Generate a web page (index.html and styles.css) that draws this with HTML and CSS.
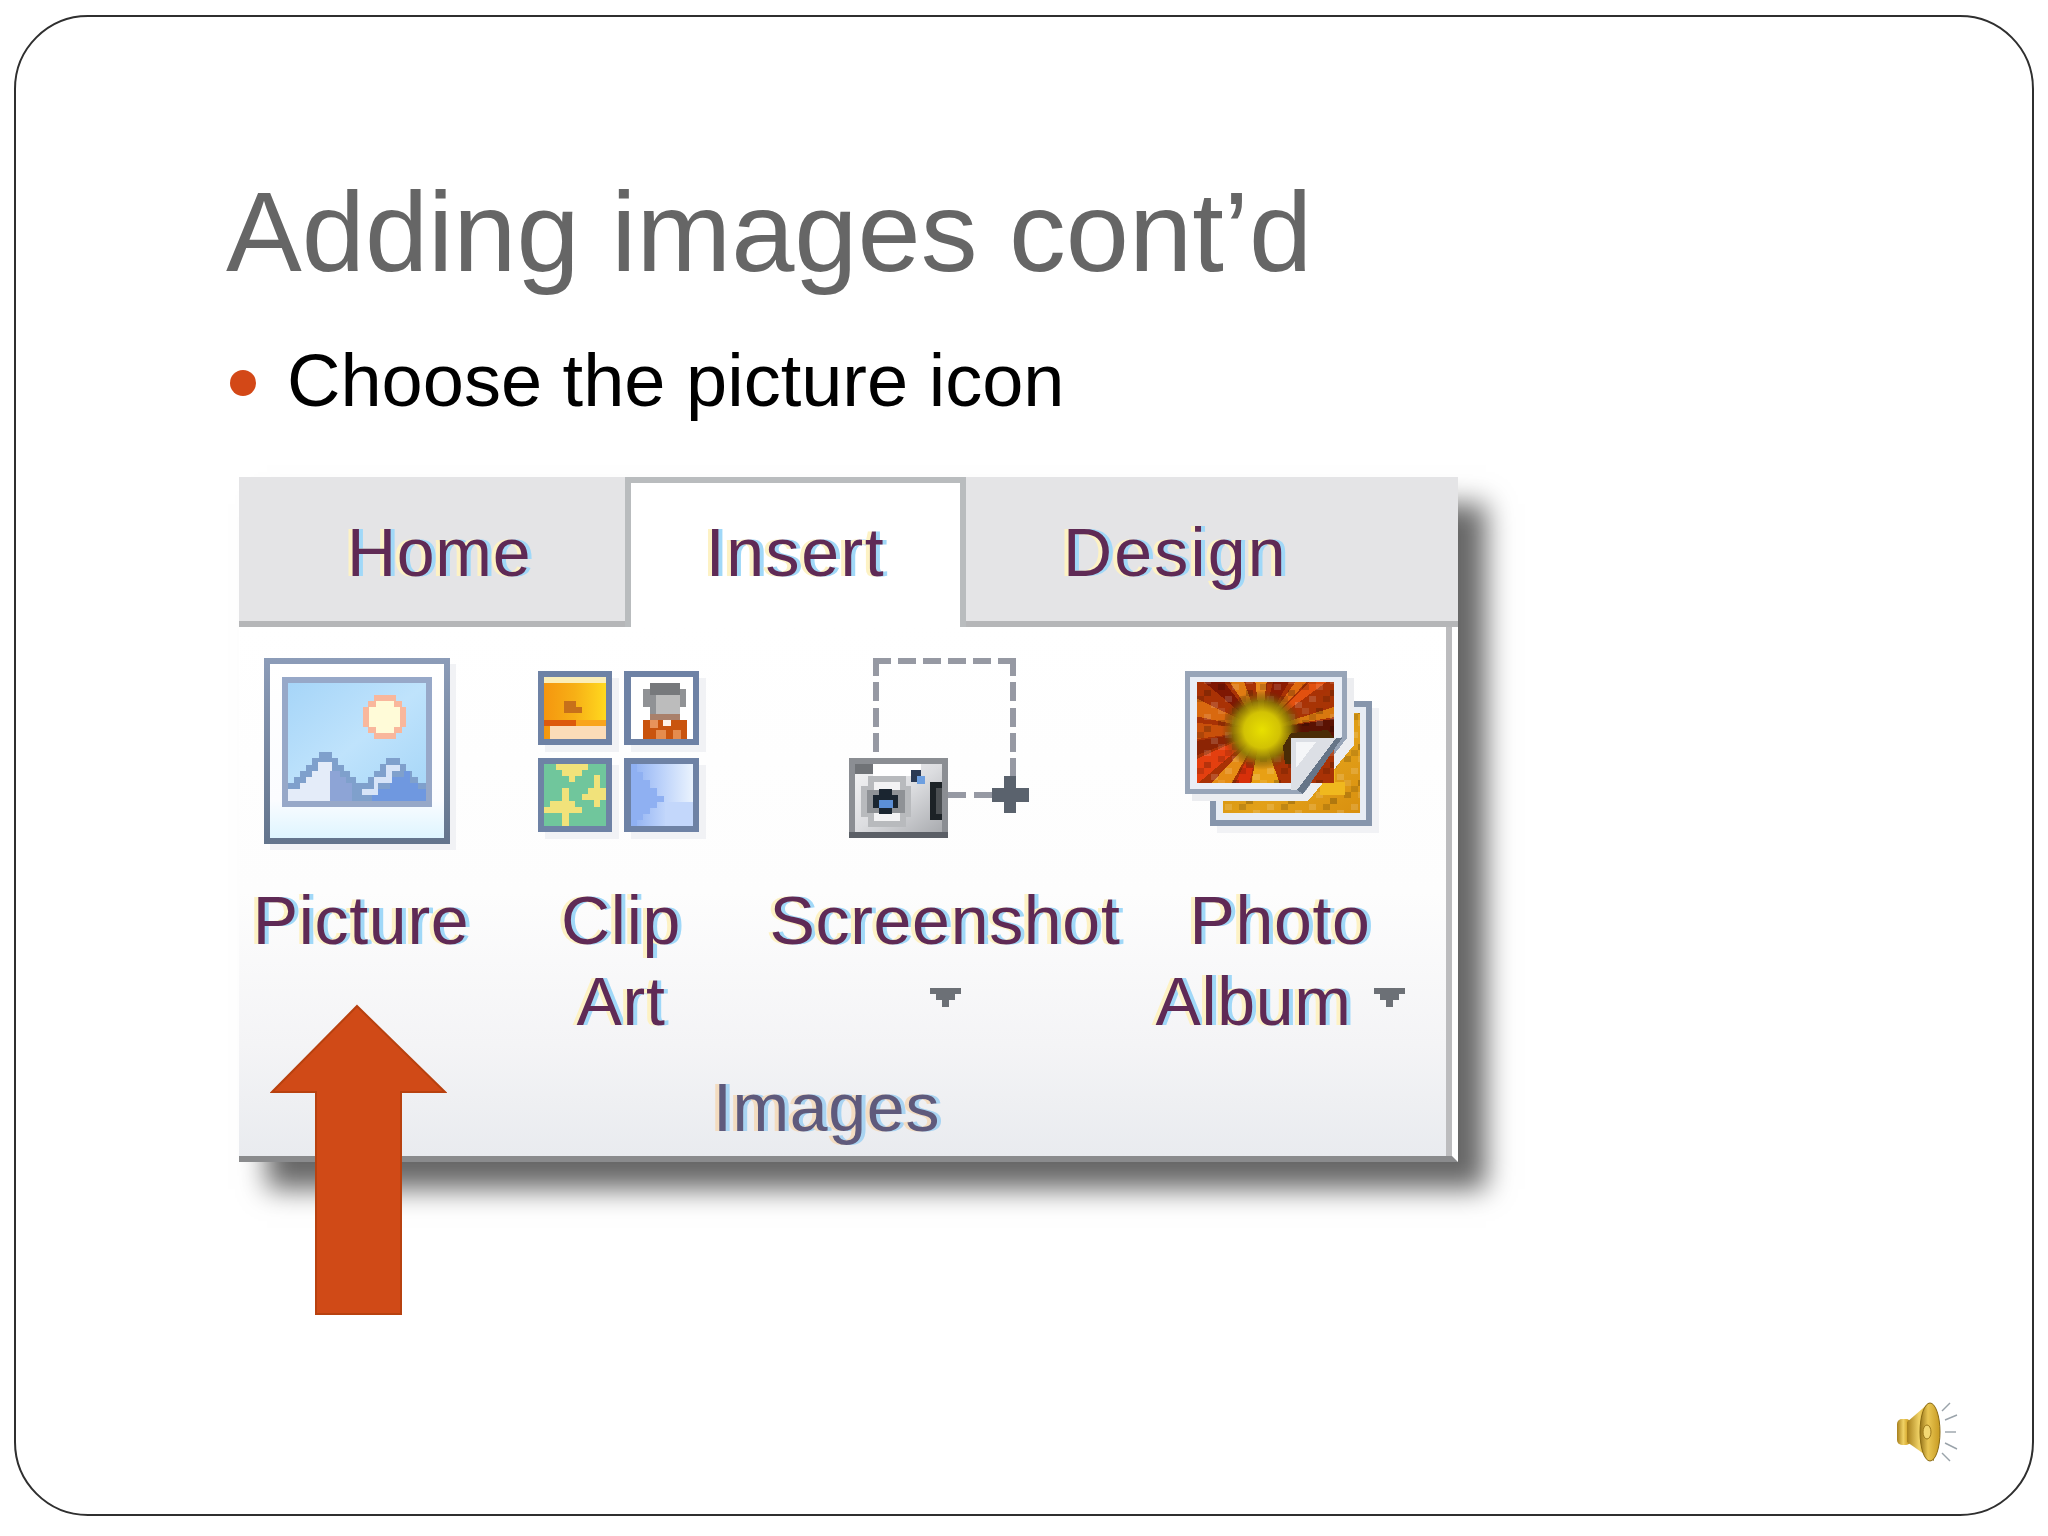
FILE: index.html
```html
<!DOCTYPE html>
<html lang="en">
<head>
<meta charset="utf-8">
<title>Adding images cont'd</title>
<link rel="stylesheet" href="styles.css">
</head>
<body>
<main class="slide">
  <h1 class="title">Adding images cont’d</h1>
  <div class="bullet-row"><span class="bullet"></span><p class="bullet-text">Choose the picture icon</p></div>

  <section class="ribbon">
    <div class="tabs">
      <div class="tab tab-home">Home</div>
      <div class="tab tab-insert">Insert</div>
      <div class="tab tab-design">Design</div>
    </div>
    <div class="panel">
      <div class="tools">
        <div class="tool tool-picture">
          <svg class="icon" viewBox="239 650 244 200" width="244" height="200" shape-rendering="crispEdges">
            <defs>
              <linearGradient id="sky" x1="0" y1="0" x2="1" y2="1"><stop offset="0" stop-color="#a6d5f8"/><stop offset=".5" stop-color="#bfe3fc"/><stop offset="1" stop-color="#a4d5f7"/></linearGradient>
              <linearGradient id="frameV" x1="0" y1="0" x2="0" y2="1"><stop offset="0" stop-color="#8c9cb8"/><stop offset="1" stop-color="#63748c"/></linearGradient>
              <linearGradient id="mat" x1="0" y1="0" x2="0" y2="1"><stop offset="0" stop-color="#ffffff"/><stop offset=".78" stop-color="#fbfcff"/><stop offset="1" stop-color="#def5ff"/></linearGradient>
            </defs>
            <rect x="270" y="664" width="186" height="186" fill="#f1f2f5"/>
            <rect x="264" y="658" width="186" height="186" fill="url(#frameV)"/>
            <rect x="270" y="664" width="174" height="174" fill="url(#mat)"/>
            <rect x="282" y="677" width="150" height="130" fill="#97a8c8"/>
            <rect x="288" y="683" width="138" height="118" fill="url(#sky)"/>
            <polygon fill="#f9b79c" points="374,695 396,695 396,701 402,701 402,707 406,707 406,727 402,727 402,733 396,733 396,739 374,739 374,733 368,733 368,727 363,727 363,707 368,707 368,701 374,701"/>
            <polygon fill="#fffbd8" points="376,701 394,701 394,707 400,707 400,727 394,727 394,733 376,733 376,727 369,727 369,707 376,707"/>
            <polygon fill="#7fa0cc" points="288,783 294,783 294,777 300,777 300,771 306,771 306,765 312,765 312,758 319,758 319,752 332,752 332,758 338,758 338,765 344,765 344,771 350,771 350,777 356,777 356,783 362,783 362,801 288,801"/>
            <polygon fill="#e4ecf9" points="288,789 300,789 300,783 306,783 306,777 312,777 312,771 318,771 318,762 332,762 332,771 330,771 330,801 288,801"/>
            <polygon fill="#8da4d6" points="330,771 340,771 340,777 346,777 346,783 352,783 352,801 330,801"/>
            <polygon fill="#7fa0cc" points="362,783 368,783 368,777 374,777 374,771 380,771 380,764 386,764 386,758 400,758 400,764 406,764 406,771 412,771 412,777 418,777 418,783 426,783 426,801 362,801"/>
            <polygon fill="#6f98e0" points="372,801 372,789 390,789 390,777 404,777 404,771 410,771 410,783 418,783 418,789 426,789 426,801"/>
            <polygon fill="#d7e4f8" points="362,789 374,789 374,777 386,777 386,765 400,765 400,771 392,771 392,783 378,783 378,795 362,795"/>
          </svg>
          <div class="label"><div class="line">Picture</div></div>
        </div>

        <div class="tool tool-clip">
          <svg class="icon" viewBox="483 650 276 200" width="276" height="200" shape-rendering="crispEdges">
            <defs>
              <linearGradient id="gold" x1="0" y1="0" x2="1" y2="0"><stop offset="0" stop-color="#f5960f"/><stop offset=".5" stop-color="#f7b016"/><stop offset="1" stop-color="#ffd91f"/></linearGradient>
              <linearGradient id="pale" x1="0" y1="0" x2="1" y2="0"><stop offset="0" stop-color="#8fb0f2"/><stop offset=".5" stop-color="#bcd2fa"/><stop offset="1" stop-color="#eaf3fe"/></linearGradient>
            </defs>
            <rect x="545" y="678" width="74" height="74" fill="#f1f2f5"/>
            <rect x="631" y="678" width="75" height="74" fill="#f1f2f5"/>
            <rect x="545" y="765" width="74" height="74" fill="#f1f2f5"/>
            <rect x="631" y="765" width="75" height="74" fill="#f1f2f5"/>

            <rect x="538" y="671" width="74" height="74" fill="#6e82a5"/>
            <rect x="544" y="677" width="62" height="62" fill="url(#gold)"/>
            <rect x="544" y="677" width="62" height="6" fill="#fbeeb8"/>
            <rect x="564" y="701" width="12" height="12" fill="#c7701a"/>
            <rect x="570" y="707" width="12" height="6" fill="#c7701a"/>
            <rect x="544" y="720" width="32" height="6" fill="#dd5a0c"/>
            <rect x="576" y="720" width="30" height="6" fill="#f9a51c"/>
            <rect x="550" y="726" width="56" height="13" fill="#fbdcb8"/>

            <rect x="624" y="671" width="75" height="74" fill="#6e82a5"/>
            <rect x="631" y="677" width="62" height="62" fill="#ffffff"/>
            <polygon fill="#909295" points="650,683 680,683 680,689 686,689 686,707 680,707 680,714 650,714 650,707 643,707 643,689 650,689"/>
            <rect x="650" y="683" width="30" height="12" fill="#77797c"/>
            <rect x="656" y="695" width="24" height="19" fill="#bcbcbc"/>
            <rect x="650" y="714" width="30" height="6" fill="#a9806a"/>
            <rect x="643" y="720" width="44" height="19" fill="#c9540e"/>
            <rect x="650" y="720" width="8" height="8" fill="#e8935a"/>
            <rect x="663" y="720" width="8" height="6" fill="#fff1e6"/>
            <rect x="656" y="730" width="10" height="9" fill="#e58c4e"/>
            <rect x="673" y="730" width="8" height="9" fill="#e58c4e"/>

            <rect x="538" y="758" width="74" height="74" fill="#6e82a5"/>
            <rect x="544" y="764" width="62" height="62" fill="#70c69c"/>
            <polygon fill="#f1e27a" points="556,764 588,764 588,770 582,770 582,776 575,776 575,782 569,782 569,776 562,776 562,770 556,770"/>
            <polygon fill="#f1e27a" points="588,788 594,788 594,775 600,775 600,788 606,788 606,800 600,800 600,807 594,807 594,800 582,800 582,794 588,794"/>
            <polygon fill="#f1e27a" points="562,788 569,788 569,801 575,801 575,807 582,807 582,813 569,813 569,826 562,826 562,813 544,813 544,807 550,807 550,801 562,801"/>

            <rect x="624" y="758" width="75" height="74" fill="#6e82a5"/>
            <rect x="631" y="764" width="62" height="62" fill="url(#pale)"/>
            <rect x="665" y="802" width="28" height="24" fill="#c3d7fb"/>
            <polygon fill="#8fb0f2" points="631,764 637,764 637,772 643,772 643,780 650,780 650,788 657,788 657,796 664,796 664,802 657,802 657,808 650,808 650,814 643,814 643,820 637,820 637,826 631,826"/>
          </svg>
          <div class="label"><div class="line">Clip</div><div class="line">Art</div></div>
        </div>

        <div class="tool tool-screenshot">
          <svg class="icon" viewBox="759 650 372 200" width="372" height="200" shape-rendering="crispEdges">
            <defs>
              <linearGradient id="cam" x1="0" y1="0" x2="1" y2="1"><stop offset="0" stop-color="#f4f4f5"/><stop offset=".5" stop-color="#dcdde0"/><stop offset="1" stop-color="#a9abaf"/></linearGradient>
            </defs>
            <g fill="#9699a3">
              <rect x="873" y="658" width="18" height="6"/><rect x="898" y="658" width="18" height="6"/><rect x="923" y="658" width="18" height="6"/><rect x="948" y="658" width="18" height="6"/><rect x="973" y="658" width="18" height="6"/><rect x="998" y="658" width="18" height="6"/>
              <rect x="873" y="664" width="6" height="12"/><rect x="873" y="682" width="6" height="19"/><rect x="873" y="708" width="6" height="19"/><rect x="873" y="733" width="6" height="19"/>
              <rect x="1010" y="664" width="6" height="12"/><rect x="1010" y="682" width="6" height="19"/><rect x="1010" y="708" width="6" height="19"/><rect x="1010" y="733" width="6" height="19"/><rect x="1010" y="758" width="6" height="20"/>
              <rect x="948" y="792" width="18" height="6"/><rect x="974" y="792" width="18" height="6"/>
            </g>
            <rect x="992" y="788" width="37" height="14" fill="#5a626d"/>
            <rect x="1004" y="776" width="12" height="37" fill="#5a626d"/>
            <rect x="849" y="758" width="99" height="80" fill="#8b8e93"/>
            <rect x="855" y="764" width="87" height="68" fill="url(#cam)"/>
            <rect x="855" y="764" width="18" height="10" fill="#707377"/>
            <rect x="873" y="764" width="48" height="12" fill="#ffffff"/>
            <rect x="849" y="832" width="99" height="6" fill="#5b5f66"/>
            <rect x="868" y="776" width="38" height="51" fill="#b8babd"/>
            <rect x="861" y="786" width="50" height="31" fill="#b8babd"/>
            <rect x="874" y="782" width="26" height="39" fill="#f3f3f4"/>
            <rect x="867" y="790" width="38" height="23" fill="#8f9296"/>
            <rect x="873" y="795" width="25" height="13" fill="#1a2530"/>
            <rect x="879" y="789" width="13" height="25" fill="#1a2530"/>
            <rect x="879" y="800" width="14" height="8" fill="#5c8fd6"/>
            <rect x="911" y="770" width="10" height="12" fill="#2a3a55"/>
            <rect x="917" y="776" width="8" height="8" fill="#6d9fe0"/>
            <rect x="930" y="782" width="12" height="38" fill="#1c2226"/>
            <rect x="936" y="788" width="6" height="26" fill="#4b4f52"/>
          </svg>
          <div class="label"><div class="line">Screenshot</div><div class="line"><svg class="caret" viewBox="0 0 31 19" width="31" height="19" shape-rendering="crispEdges"><polygon fill="#6c7076" points="0,0 31,0 31,6 25,6 25,12 19,12 19,19 12,19 12,12 6,12 6,6 0,6"/></svg></div></div>
        </div>

        <div class="tool tool-album">
          <svg class="icon" viewBox="1131 650 298 200" width="298" height="200" shape-rendering="crispEdges">
            <defs>
              <linearGradient id="backG" x1="0" y1="0" x2="1" y2="1"><stop offset="0" stop-color="#c98a06"/><stop offset=".6" stop-color="#e2a019"/><stop offset="1" stop-color="#d9900f"/></linearGradient>
              <radialGradient id="sun" gradientUnits="userSpaceOnUse" cx="1262" cy="730" r="40"><stop offset="0" stop-color="#e8e000"/><stop offset=".45" stop-color="#d2c204"/><stop offset=".72" stop-color="#8c7a06" stop-opacity=".9"/><stop offset="1" stop-color="#5c3a06" stop-opacity="0"/></radialGradient>
              <clipPath id="innerClip"><rect x="1197" y="682" width="137" height="101"/></clipPath>
              <pattern id="mosaic" x="0" y="0" width="42" height="36" patternUnits="userSpaceOnUse">
                <rect x="0" y="0" width="7" height="6" fill="#000" fill-opacity=".16"/>
                <rect x="14" y="0" width="7" height="6" fill="#fff" fill-opacity=".12"/>
                <rect x="28" y="6" width="7" height="6" fill="#000" fill-opacity=".2"/>
                <rect x="7" y="12" width="7" height="6" fill="#fff" fill-opacity=".14"/>
                <rect x="21" y="12" width="7" height="6" fill="#000" fill-opacity=".14"/>
                <rect x="35" y="18" width="7" height="6" fill="#fff" fill-opacity=".15"/>
                <rect x="0" y="24" width="7" height="6" fill="#fff" fill-opacity=".1"/>
                <rect x="14" y="24" width="7" height="6" fill="#000" fill-opacity=".2"/>
                <rect x="28" y="30" width="7" height="6" fill="#fff" fill-opacity=".13"/>
                <rect x="7" y="30" width="7" height="6" fill="#000" fill-opacity=".12"/>
              </pattern>
            </defs>
            <rect x="1217" y="708" width="162" height="125" fill="#f1f2f5"/>
            <rect x="1210" y="701" width="162" height="125" fill="#8796ac"/>
            <rect x="1216" y="707" width="150" height="113" fill="#e8edf4"/>
            <rect x="1223" y="713" width="137" height="100" fill="url(#backG)"/>
            <rect x="1223" y="713" width="137" height="100" fill="url(#mosaic)"/>
            <polygon fill="#f0b81e" points="1320,770 1335,770 1335,782 1345,782 1345,795 1320,795"/>
            <polygon fill="#ecedf0" points="1192,678 1354,678 1354,745 1308,801 1192,801"/>
            <polygon fill="#98a5b8" points="1185,671 1347,671 1347,738 1303,794 1185,794"/>
            <polygon fill="#e9eef6" points="1190,677 1342,677 1342,736 1298,789 1190,789"/>
            <rect x="1197" y="682" width="137" height="101" fill="#a93205"/>
            <g clip-path="url(#innerClip)">
              <polygon fill="#d9690f" points="1261,730 1190,695 1190,715"/>
              <polygon fill="#7f1703" points="1261,730 1190,670 1215,670"/>
              <polygon fill="#df7b12" points="1261,730 1222,670 1240,670"/>
              <polygon fill="#e8871b" points="1261,730 1254,670 1268,670"/>
              <polygon fill="#8c1c03" points="1261,730 1276,670 1296,670"/>
              <polygon fill="#df6a10" points="1261,730 1304,670 1318,670"/>
              <polygon fill="#e2500f" points="1261,730 1322,670 1340,672"/>
              <polygon fill="#a83405" points="1261,730 1340,684 1340,702"/>
              <polygon fill="#d8780f" points="1261,730 1340,705 1340,716"/>
              <polygon fill="#5a1203" points="1261,730 1340,718 1340,740"/>
              <polygon fill="#c9500a" points="1261,730 1190,722 1190,740"/>
              <polygon fill="#8c2404" points="1261,730 1190,742 1190,758"/>
              <polygon fill="#e43f0f" points="1261,730 1190,790 1190,762"/>
              <polygon fill="#e58c14" points="1261,730 1205,790 1228,790"/>
              <polygon fill="#d8300a" points="1261,730 1232,790 1248,790"/>
              <polygon fill="#e8a014" points="1261,730 1250,790 1282,790"/>
              <rect x="1197" y="682" width="137" height="101" fill="url(#mosaic)"/>
              <rect x="1197" y="682" width="137" height="101" fill="url(#sun)"/>
            </g>
            <polygon fill="#4a2c06" points="1283,746 1291,733 1328,730 1334,738 1296,740 1291,764 1285,764"/>
            <polygon fill="#dcdfe5" points="1291,738 1336,738 1297,790 1291,790"/>
            <polygon fill="#f5f6f8" points="1296,742 1316,742 1296,768"/>
            <polygon fill="#667588" points="1336,738 1342,738 1303,794 1297,790"/>
          </svg>
          <div class="label"><div class="line">Photo</div><div class="line">Album<svg class="caret caret-side" viewBox="0 0 31 19" width="31" height="19" shape-rendering="crispEdges"><polygon fill="#6c7076" points="0,0 31,0 31,6 25,6 25,12 19,12 19,19 12,19 12,12 6,12 6,6 0,6"/></svg></div></div>
        </div>
      </div>
      <div class="group-name">Images</div>
    </div>

    <svg class="arrow" viewBox="0 0 177 312" width="177" height="312">
      <polygon fill="#d04a17" stroke="#b8410f" stroke-width="2" points="87,2 175,88 131,88 131,310 46,310 46,88 2,88"/>
    </svg>
  </section>

  <svg class="speaker" viewBox="0 0 64 62" width="64" height="62">
    <defs>
      <linearGradient id="horn" x1="0" y1="0" x2="1" y2="0"><stop offset="0" stop-color="#a8801c"/><stop offset=".45" stop-color="#f0d266"/><stop offset=".75" stop-color="#d6a92e"/><stop offset="1" stop-color="#8a6a12"/></linearGradient>
      <linearGradient id="mouth" x1="0" y1="0" x2="1" y2="0"><stop offset="0" stop-color="#96741a"/><stop offset=".4" stop-color="#e9c653"/><stop offset="1" stop-color="#c79a22"/></linearGradient>
    </defs>
    <rect x="1" y="18" width="14" height="26" rx="5" fill="url(#horn)"/>
    <polygon points="11,21 33,2 38,60 11,41" fill="url(#horn)"/>
    <ellipse cx="34" cy="31" rx="10" ry="29" fill="url(#mouth)" stroke="#8a6a12" stroke-width="1"/>
    <ellipse cx="31" cy="31" rx="4" ry="7" fill="#f3d873" stroke="#9a7618"/>
    <g stroke="#9aa3aa" stroke-width="1.4" fill="none">
      <line x1="46" y1="10" x2="54" y2="2"/>
      <line x1="49" y1="19" x2="61" y2="14"/>
      <line x1="49" y1="31" x2="60" y2="31"/>
      <line x1="49" y1="42" x2="61" y2="48"/>
      <line x1="46" y1="52" x2="54" y2="60"/>
    </g>
  </svg>
</main>
</body>
</html>
```

FILE: styles.css
```css
* { box-sizing: border-box; }

html, body {
  margin: 0;
  background: #ffffff;
}

.slide {
  position: relative;
  margin: 15px 14px 0 14px;
  width: 2020px;
  height: 1501px;
  border: 2px solid #2f2f2f;
  border-radius: 74px;
  padding: 158px 0 0 214px;
  font-family: "Liberation Sans", Arial, sans-serif;
}

.title {
  margin: 0 0 55px -4px;
  font-size: 113.6px;
  line-height: 1;
  font-weight: 400;
  color: #666666;
  white-space: nowrap;
}

.bullet-row {
  display: flex;
  align-items: flex-start;
  gap: 31px;
  margin-bottom: 59px;
}

.bullet {
  flex: none;
  width: 26px;
  height: 26px;
  margin-top: 26px;
  border-radius: 50%;
  background: #d34817;
}

.bullet-text {
  margin: 0;
  font-size: 74px;
  line-height: 1;
  color: #000000;
  white-space: nowrap;
}

.ribbon {
  position: relative;
  margin-left: 9px;
  width: 1219px;
  box-shadow: 28px 27px 26px rgba(0, 0, 0, 0.6);
  font-size: 68px;
  line-height: 81px;
  letter-spacing: 0.7px;
  color: #5f2a55;
  text-shadow: -4px 0 #fdf2c4, 4px 0 #a0d8f8;
}

.tabs {
  display: flex;
  height: 150px;
}

.tab {
  padding-top: 35px;
  background: #e4e4e6;
  border-bottom: 6px solid #b5b6b8;
}

.tab-home {
  width: 386px;
  padding-left: 108px;
}

.tab-insert {
  width: 341px;
  padding-top: 29px;
  text-align: center;
  letter-spacing: 1.6px;
  background: #ffffff;
  border: 6px solid #b9bcbe;
  border-bottom: 0;
}

.tab-design {
  width: 492px;
  padding-left: 97px;
  letter-spacing: 2.2px;
}

.panel {
  padding: 23px 0 8px;
  background: linear-gradient(#ffffff 0%, #fdfdfd 50%, #f4f4f6 79%, #e9ebef 100%);
  border-right: 6px solid #ffffff;
  border-bottom: 6px solid #8a8b8d;
  box-shadow: inset -6px 0 #bcbcbe;
}

.tools {
  display: flex;
}

.tool {
  flex: none;
}

.tool-picture { width: 244px; }
.tool-clip { width: 276px; }
.tool-screenshot { width: 372px; }
.tool-album { width: 298px; }

.icon {
  display: block;
  margin-bottom: 30px;
}

.label {
  height: 162px;
}

.line {
  display: flex;
  justify-content: center;
  height: 81px;
}

.caret {
  margin-top: 27px;
}

.caret-side {
  margin-left: 22px;
}

.group-name {
  margin-top: 25px;
  padding-right: 38px;
  text-align: center;
  color: #5f5a7c;
  text-shadow: -4px 0 #f3dcc0, 4px 0 #a9d4f2;
}

.arrow {
  position: absolute;
  left: 31px;
  top: 527px;
}

.speaker {
  position: absolute;
  left: 1880px;
  top: 1384px;
}
```
